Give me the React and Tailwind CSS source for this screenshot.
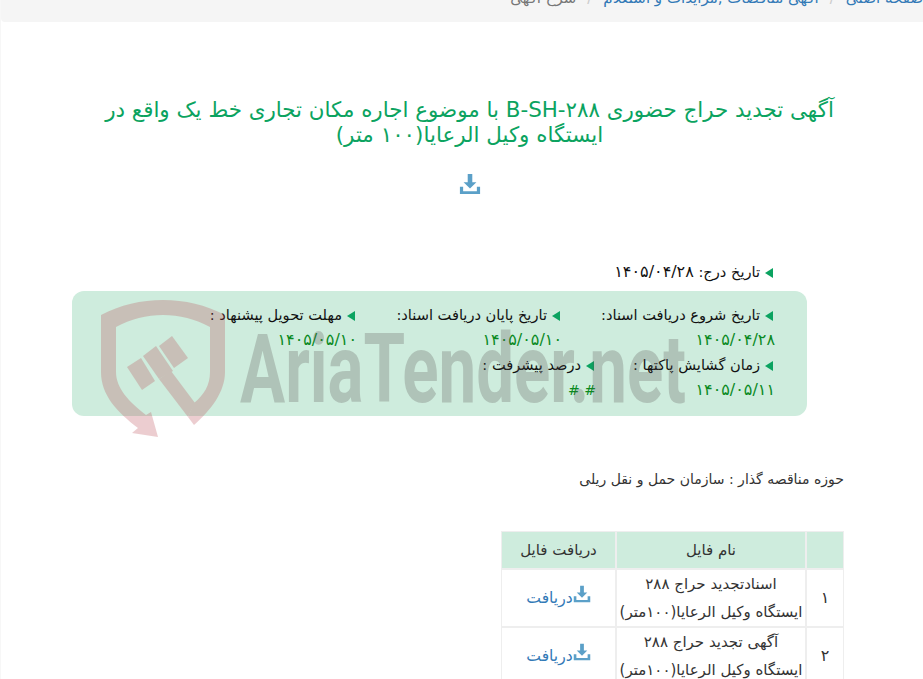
import React from "react";

const fa = "font-['DejaVu_Sans','Noto_Sans',sans-serif]";

function DownloadIcon({ className }) {
  return (
    <svg viewBox="0 0 24 24" className={className} fill="currentColor">
      <path d="M9.5 1h5v9h4.5l-7 7-7-7h4.5z" />
      <path d="M1 15h3.5v5h15v-5H23v8H1z" />
    </svg>
  );
}

function Arrow() {
  return (
    <span className="inline-block w-0 h-0 border-y-[5px] border-y-transparent border-r-[8px] border-r-[#0ba360] ml-[5px] align-middle" />
  );
}

function Field({ label, value, className, valueClass = "text-[16px]" }) {
  return (
    <div className={className}>
      <div className="text-[14.6px] leading-[20px] text-[#111] whitespace-nowrap">
        <Arrow />
        {label}
      </div>
      <div className={`${valueClass} leading-[20px] mt-[5px] -mr-[2px] text-[#0a8a1f]`}>{value}</div>
    </div>
  );
}

function Watermark() {
  return (
    <svg
      viewBox="0 0 923 679"
      className="absolute left-0 top-0 w-[923px] h-[679px] pointer-events-none"
    >
      <g fill="#b8434c" opacity="0.26">
        <path d="M100 315C138 295 186 295 224 315V372C224 392 210 410 193 425L187 417L193 403C203 395 209 385 209 372V327C180 311 144 311 115 327V372C115 388 128 402 145 415L150 412L157 437L131 433L137 428C116 412 100 395 100 372Z" />
        <path d="M126 367L140 358L154 381L141 390Z" />
        <path d="M142 356L155 346L172 371L158 379Z" />
        <path d="M158 346L171 336L187 358L173 368Z" />
        <path d="M158 379L170 371L194 403L187 417Z" />
      </g>
      <text
        x="239"
        y="402"
        direction="ltr"
        fill="#564c4d"
        opacity="0.25"
        fontFamily="Roboto, sans-serif"
        fontWeight="700"
        fontSize="96"
        textLength="446"
        lengthAdjust="spacingAndGlyphs"
      >
        AriaTender.net
      </text>
    </svg>
  );
}

function FileRow({ num, line1, line2 }) {
  return (
    <tr>
      <td className="border border-[#eee] px-[4px] text-[16px]">{num}</td>
      <td className="border border-[#eee] px-[2px] whitespace-nowrap">
        {line1}
        <br />
        {line2}
      </td>
      <td className="border border-[#eee] text-[#337ab7]">
        <span className="inline-flex items-start">
          <DownloadIcon className="w-[18px] h-[18px] text-[#5ba0c8] mt-[1px]" />
          <span className="text-[15.6px]">دریافت</span>
        </span>
      </td>
    </tr>
  );
}

export default function App() {
  return (
    <div dir="rtl" className={`relative w-[923px] h-[679px] overflow-hidden bg-white border-l border-l-[#f7f7f7] ${fa}`}>
      {/* breadcrumb */}
      <div className="h-[22px] bg-[#f5f5f5] rounded-bl-[4px] flex items-start overflow-hidden">
        <div className="flex text-[15px] leading-[20px] -mt-[12px] whitespace-nowrap">
          <span className="text-[#337ab7]">صفحه اصلی</span>
          <span className="text-[#ccc] px-[11px]">/</span>
          <span className="text-[#337ab7]">آگهی مناقصات ,مزایدات و استعلام</span>
          <span className="text-[#ccc] px-[11px]">/</span>
          <span className="text-[#777]">شرح آگهی</span>
        </div>
      </div>

      {/* title */}
      <div className="pt-[75px] pl-[81px] pr-[66px]">
        <h1 className="text-[#0ba360] text-[21.4px] leading-[25px] text-center font-normal">
          آگهی تجدید حراج حضوری B-SH-۲۸۸ با موضوع اجاره مکان تجاری خط یک واقع در ایستگاه وکیل الرعایا(۱۰۰ متر)
        </h1>
      </div>

      <div className="flex justify-center mt-[26px] pl-[15px]">
        <DownloadIcon className="w-[22px] h-[22px] text-[#5ba0c8]" />
      </div>

      {/* dates */}
      <div className="pr-[150px] mt-[67px] text-[14.6px] leading-[20px] text-[#111]">
        <Arrow />
        تاریخ درج: <span className="text-[16px]">۱۴۰۵/۰۴/۲۸</span>
      </div>

      <div className="mr-[116px] w-[735px] h-[125px] mt-[9px] rounded-[12px] bg-[#ceecdd] pr-[34px] pt-[14px]">
        <div className="flex">
          <Field className="w-[213px]" label="تاریخ شروع دریافت اسناد:" value="۱۴۰۵/۰۴/۲۸" />
          <Field className="w-[205px]" label="تاریخ پایان دریافت اسناد:" value="۱۴۰۵/۰۵/۱۰" />
          <Field label="مهلت تحویل پیشنهاد :" value="۱۴۰۵/۰۵/۱۰" />
        </div>
        <div className="flex mt-[5px]">
          <Field className="w-[179px]" label="زمان گشایش پاکتها :" value="۱۴۰۵/۰۵/۱۱" />
          <Field label="درصد پیشرفت :" value="# #" valueClass="text-[14px]" />
        </div>
      </div>

      <div className="pr-[79px] mt-[53px] text-[14px] leading-[20px] text-[#333]">
        حوزه مناقصه گذار : سازمان حمل و نقل ریلی
      </div>

      {/* files */}
      <table className="mr-[79px] mt-[42px] w-[343px] border-separate border-spacing-0 text-[15px] text-[#333] text-center">
        <thead>
          <tr className="h-[38px] bg-[#ceecdd]">
            <th className="w-[38px] font-normal border border-[#eee]"></th>
            <th className="w-[190px] font-normal border border-[#eee]">نام فایل</th>
            <th className="font-normal border border-[#eee]">دریافت فایل</th>
          </tr>
        </thead>
        <tbody className="leading-[28px]">
          <FileRow num="۱" line1="اسنادتجدید حراج ۲۸۸" line2="ایستگاه وکیل الرعایا(۱۰۰متر)" />
          <FileRow num="۲" line1="آگهی تجدید حراج ۲۸۸" line2="ایستگاه وکیل الرعایا(۱۰۰متر)" />
        </tbody>
      </table>

      <Watermark />
    </div>
  );
}
